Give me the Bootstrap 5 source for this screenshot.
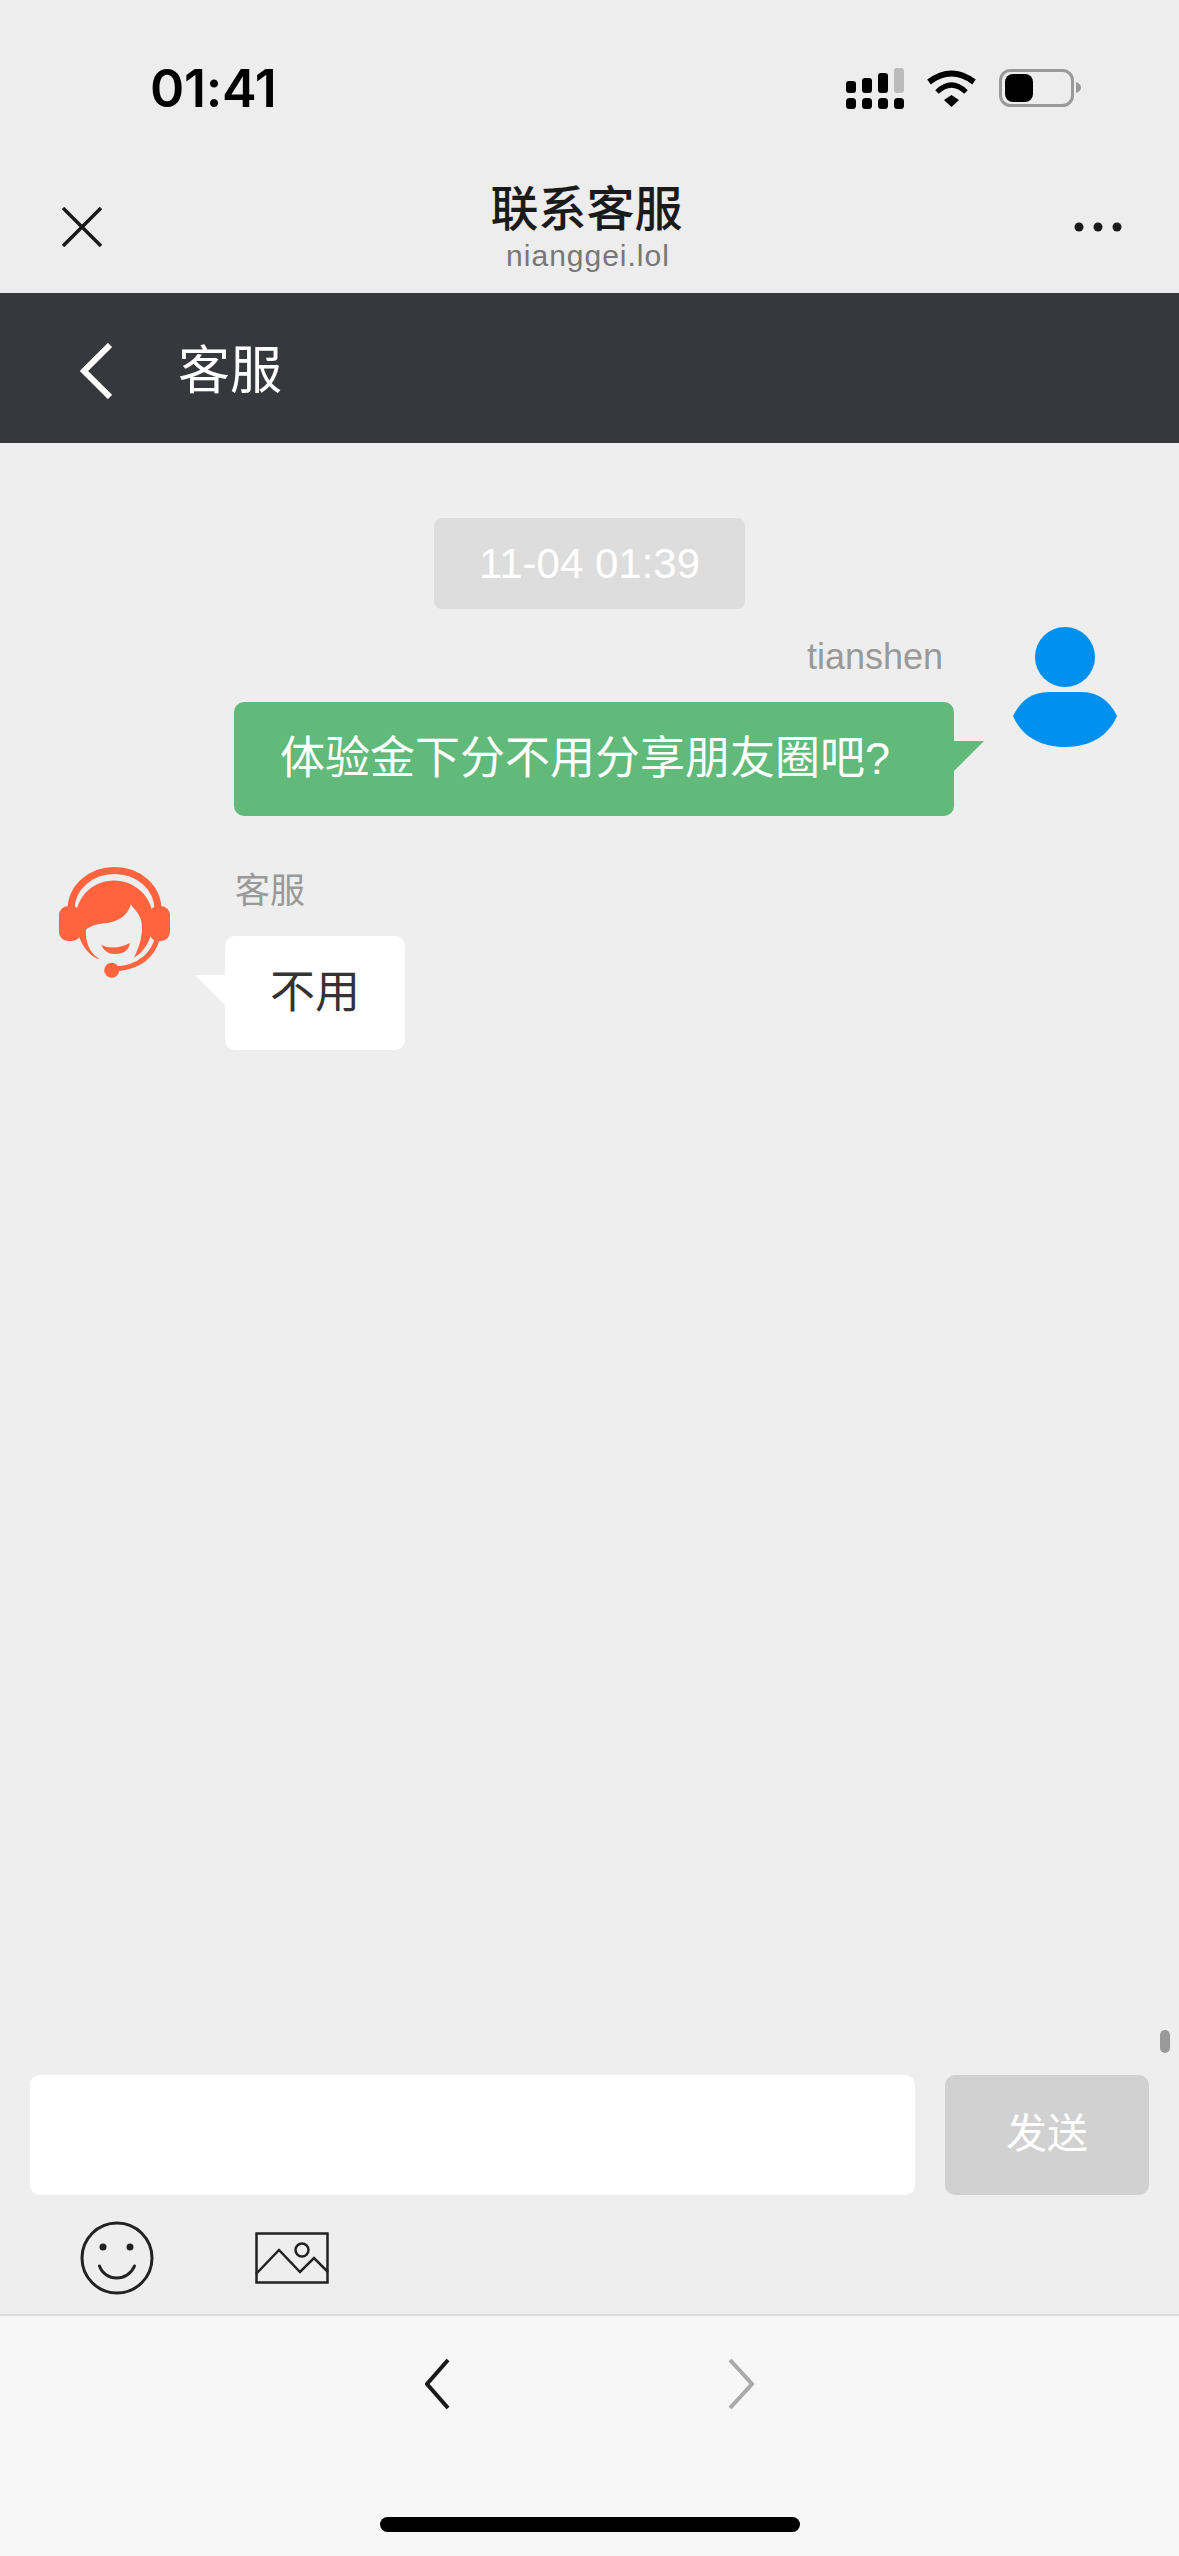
<!DOCTYPE html>
<html lang="zh">
<head>
  <meta charset="UTF-8" />
  <meta name="viewport" content="width=device-width,initial-scale=1" />
  <title>联系客服</title>
  <link href="https://cdn.jsdelivr.net/npm/bootstrap@5.3.0/dist/css/bootstrap.min.css" rel="stylesheet" />
  <style>
    body { background: #eeeeee; font-family: "Liberation Sans", "Noto Sans CJK SC", sans-serif; }
    .app-shell { width: 1179px; height: 2556px; overflow: hidden; }
    .wx-top { background: #ededed; height: 293px; flex: none; }
    .status-row { height: 176px; padding: 0 98px 0 150px; }
    .status-time { font-family: "Inter", sans-serif; font-weight: 600; font-size: 52px; line-height: 60px; color: #000; letter-spacing: -.3px; margin-top: 2px; }
    .status-icons { gap: 22px; }
    .title-row { height: 117px; padding: 0 57px 0 62px; }
    .title-icon { margin-bottom: 16px; flex: none; }
    .title-main { font-size: 48px; line-height: 56px; font-weight: 500; color: #1a1a1a; margin: 6px 3px 0 0; }
    .title-sub { font-size: 30px; line-height: 36px; color: #777; letter-spacing: 1px; }
    .dark-bar { background: #37383d; height: 150px; flex: none; padding: 5px 0 0 80px; gap: 66px; color: #fff; font-size: 52px; }
    .chat-area { position: relative; }
    .time-chip { width: 311px; height: 91px; margin: 75px auto 18px; background: #dddddd; color: #fff; font-size: 42px; border-radius: 8px; }
    .msg-me { padding-right: 62px; gap: 59px; margin-bottom: 50px; }
    .msg-them { padding-left: 58px; gap: 54px; }
    .who-name { font-size: 35px; line-height: 50px; color: #999; height: 50px; margin-bottom: 20px; }
    .who-me { font-size: 36px; margin: 5px 11px 20px 0; text-align: right; }
    .who-them { margin-left: 10px; }
    .talk { position: relative; height: 114px; font-size: 45px; border-radius: 10px; }
    .talk-me { background: #61b97a; color: #fff; width: 720px; padding-left: 46px; }
    .talk-them { background: #fff; color: #333; width: 180px; justify-content: center; }
    .talk::after { content: ""; position: absolute; top: 39px; width: 30px; height: 30px; }
    .talk-me::after { left: 100%; background: #61b97a; clip-path: polygon(0 0, 100% 0, 0 100%); }
    .talk-them::after { right: 100%; background: #fff; clip-path: polygon(0 0, 100% 0, 100% 100%); }
    .scroll-thumb { position: absolute; right: 9px; bottom: 22px; width: 10px; height: 23px; border-radius: 5px; background: #999; }
    .composer { padding: 0 30px; gap: 30px; flex: none; }
    .composer-input { height: 120px; border: 0; border-radius: 10px; background: #fff; }
    .send-btn { width: 204px; height: 120px; flex: none; border: 0; border-radius: 10px; background: #d1d1d1; color: #fff; font-size: 41px; }
    .tool-row { height: 119px; padding: 7px 0 0 80px; gap: 101px; flex: none; }
    .wx-bottom { background: #f7f7f7; border-top: 2px solid #dcdcdc; height: 242px; flex: none; padding-top: 43px; }
    .bottom-nav { gap: 277px; }
    .home-bar { width: 420px; height: 15px; border-radius: 8px; background: #000; margin-bottom: 24px; }
  </style>
</head>
<body>
  <div class="app-shell d-flex flex-column">
    <header class="wx-top">
      <div class="status-row d-flex justify-content-between align-items-center">
        <div class="status-time">01:41</div>
        <div class="status-icons d-flex align-items-center">
          <svg width="58" height="41" viewBox="0 0 58 41">
            <rect x="0" y="13" width="10" height="12" rx="3" />
            <rect x="16" y="10" width="10" height="15" rx="3" />
            <rect x="32" y="5" width="10" height="20" rx="3" />
            <rect x="48" y="0" width="10" height="25" rx="3" fill="#bbb" />
            <rect x="0" y="30" width="10" height="11" rx="3.5" />
            <rect x="16" y="30" width="10" height="11" rx="3.5" />
            <rect x="32" y="30" width="10" height="11" rx="3.5" />
            <rect x="48" y="30" width="10" height="11" rx="3.5" />
          </svg>
          <svg width="51" height="38" viewBox="0 0 51 38">
            <path d="M3 13Q25.5-4 48 13" fill="none" stroke="#000" stroke-width="6" />
            <path d="M11 23Q25.5 9 40 23" fill="none" stroke="#000" stroke-width="5" />
            <path d="M18 31L25.5 26 33 31 25.5 38Z" />
          </svg>
          <svg width="82" height="38" viewBox="0 0 82 38">
            <rect x="1.5" y="1.5" width="72" height="35" rx="10" fill="none" stroke="#999" stroke-width="3" />
            <rect x="6" y="5" width="28" height="28" rx="8" />
            <path d="M77 13Q82 15 82 18.500 82 22 77 24Z" fill="#999" />
          </svg>
        </div>
      </div>
      <div class="title-row d-flex justify-content-between align-items-center">
        <svg class="title-icon" width="40" height="40" viewBox="0 0 40 40">
          <path d="M1 1L39 39M39 1L1 39" stroke="#1a1a1a" stroke-width="3.500" fill="none" />
        </svg>
        <div class="text-center align-self-start">
          <div class="title-main">联系客服</div>
          <div class="title-sub">nianggei.lol</div>
        </div>
        <svg class="title-icon" width="48" height="10" viewBox="0 0 48 10">
          <circle cx="5" cy="5" r="4.500" fill="#1a1a1a" />
          <circle cx="24" cy="5" r="4.500" fill="#1a1a1a" />
          <circle cx="43" cy="5" r="4.500" fill="#1a1a1a" />
        </svg>
      </div>
    </header>

    <div class="dark-bar d-flex align-items-center">
      <svg width="32" height="56" viewBox="0 0 32 56">
        <path d="M30 2L4 28 30 54" fill="none" stroke="#fff" stroke-width="6" />
      </svg>
      <span>客服</span>
    </div>

    <main class="chat-area flex-grow-1">
      <div class="time-chip d-flex align-items-center justify-content-center">11-04 01:39</div>

      <div class="msg-me d-flex justify-content-end">
        <div>
          <div class="who-name who-me">tianshen</div>
          <div class="talk talk-me d-flex align-items-center">体验金下分不用分享朋友圈吧?</div>
        </div>
        <svg class="flex-shrink-0" width="104" height="120" viewBox="0 0 104 120">
          <circle cx="52" cy="30" r="30" fill="#0091f0" />
          <path d="M0 89C6 77 16 65 36 65L68 65C88 65 98 77 104 89 96 108 78 120 52 120 26 120 8 108 0 89Z" fill="#0091f0" />
        </svg>
      </div>

      <div class="msg-them d-flex">
        <svg class="flex-shrink-0" width="113" height="113" viewBox="0 0 113 113">
          <g fill="#ff643f">
            <path d="M18 51.700C18 30 36 14.500 56 14.500 76 14.500 95 30 95 53.300 95 71.700 87 86 76 91.500 83 78.300 85.300 65 83.300 55 81 46.700 76 43.300 72.700 38.300 71 46.700 62.700 56.500 44.300 57.500 37.700 58 32.700 60.500 28 63.300 27 75 31 86.700 41.700 93.300 27.700 89 18 71.700 18 51.700Z" />
            <path d="M43.300 79Q56 85 72 77 70 88 57 88 47 88 43.300 79Z" />
            <rect x="1" y="40" width="22" height="35" rx="9" />
            <rect x="91" y="40" width="21" height="35" rx="9" />
            <circle cx="53.700" cy="104.300" r="7.500" />
          </g>
          <path d="M13 44C13 21 33 4.500 56.500 4.500S100 21 100 44" fill="none" stroke="#ff643f" stroke-width="7" />
          <path d="M100 70Q93 100 58 103" fill="none" stroke="#ff643f" stroke-width="5" />
        </svg>
        <div>
          <div class="who-name who-them">客服</div>
          <div class="talk talk-them d-flex align-items-center">不用</div>
        </div>
      </div>

      <div class="scroll-thumb"></div>
    </main>

    <div class="composer d-flex">
      <input class="composer-input form-control shadow-none flex-grow-1" type="text" />
      <button class="send-btn btn" type="button">发送</button>
    </div>

    <div class="tool-row d-flex align-items-center">
      <svg width="74" height="74" viewBox="0 0 74 74">
        <circle cx="37" cy="37" r="35" fill="none" stroke="#222" stroke-width="3" />
        <circle cx="23" cy="26" r="3.500" fill="#222" />
        <circle cx="50" cy="26" r="3.500" fill="#222" />
        <path d="M19.500 45C25 61 48 61 54.500 45" fill="none" stroke="#222" stroke-width="3" stroke-linecap="round" />
      </svg>
      <svg width="74" height="52" viewBox="0 0 74 52">
        <rect x="1.500" y="1.500" width="71" height="49" fill="none" stroke="#222" stroke-width="2.500" />
        <path d="M1 42L24 18 45 40 59 26 73 40" fill="none" stroke="#222" stroke-width="2.500" />
        <circle cx="47" cy="18" r="6.500" fill="none" stroke="#222" stroke-width="2.500" />
      </svg>
    </div>

    <footer class="wx-bottom d-flex flex-column align-items-center">
      <div class="bottom-nav d-flex">
        <svg width="25" height="50" viewBox="0 0 25 50">
          <path d="M23 1L2 25 23 49" fill="none" stroke="#1a1a1a" stroke-width="4" />
        </svg>
        <svg width="28" height="50" viewBox="0 0 28 50">
          <path d="M3 1L25 25 3 49" fill="none" stroke="#aaa" stroke-width="4" />
        </svg>
      </div>
      <div class="home-bar mt-auto"></div>
    </footer>
  </div>

  <script src="https://cdn.jsdelivr.net/npm/bootstrap@5.3.0/dist/js/bootstrap.bundle.min.js"></script>
</body>
</html>
